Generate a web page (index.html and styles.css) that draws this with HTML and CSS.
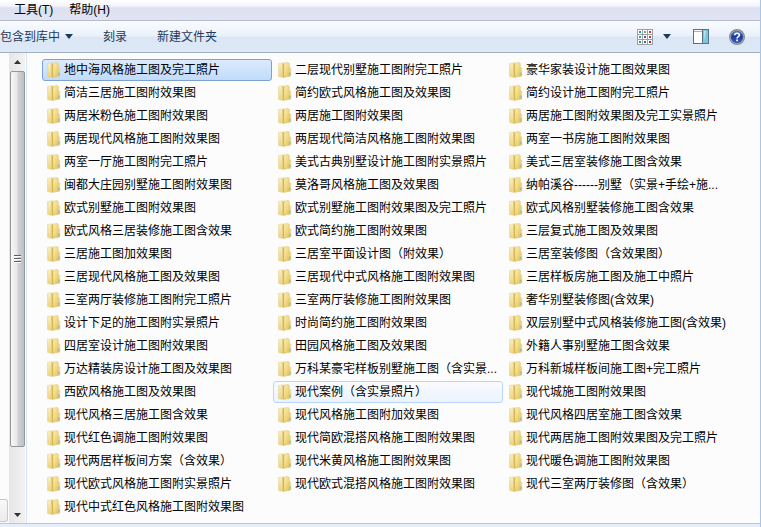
FILE: index.html
```html
<!DOCTYPE html>
<html lang="zh-CN"><head>
<meta charset="utf-8">
<meta name="viewport" content="width=device-width, initial-scale=1.0">
<title>施工图</title>
<link rel="stylesheet" href="styles.css">
</head>
<body>
<div class="window">
  <nav class="menubar">
    <button class="menu">工具(T)</button>
    <button class="menu">帮助(H)</button>
  </nav>

  <div class="toolbar">
    <button class="tool">包含到库中
      <svg class="arrow" width="8" height="5" viewBox="0 0 8 5"><path d="M0 0h8L4 5z"/></svg>
    </button>
    <button class="tool">刻录</button>
    <button class="tool">新建文件夹</button>
    <span class="spacer"></span>
    <button class="tool view" aria-label="更改视图">
      <svg id="view_icon" width="16" height="16" viewBox="0 0 16 16"></svg>
      <svg class="arrow" width="8" height="5" viewBox="0 0 8 5"><path d="M0 0h8L4 5z"/></svg>
    </button>
    <button class="tool preview" aria-label="预览窗格">
      <svg width="16" height="15" viewBox="0 0 16 15">
        <rect x=".5" y=".5" width="15" height="14" fill="#fff" stroke="#5b7088"/>
        <path d="M1 2.500h9" stroke="#a3b5c8"/>
        <rect x="10" y="1" width="5" height="13" fill="#7cc8dd"/>
        <path d="M11 12V2h2z" fill="#b5e5f1"/>
        <path d="M9.500 1v13" stroke="#5b7088"/>
      </svg>
    </button>
    <button class="tool" aria-label="帮助">
      <svg width="16" height="16" viewBox="0 0 16 16">
        <defs><linearGradient id="g_help" x1="0" y1="0" x2="0" y2="1">
          <stop offset="0" stop-color="#6482d0"/><stop offset=".45" stop-color="#1d3a9c"/><stop offset="1" stop-color="#3261cc"/>
        </linearGradient></defs>
        <circle cx="8" cy="8" r="7.400" fill="#c3c8d1" stroke="#858b96" stroke-width="1.200"/>
        <circle cx="8" cy="8" r="6" fill="url(#g_help)" stroke="#2b3f7d" stroke-width=".5"/>
        <path d="M5.700 6.300C5.800 3.600 10.400 3.600 10.400 6c0 1.700-2.300 1.600-2.300 3.400" fill="none" stroke="#fff" stroke-width="1.700"/>
        <rect x="7.200" y="10.500" width="1.800" height="1.700" fill="#fff"/>
      </svg>
    </button>
  </div>

  <div class="main">
    <div class="side"><div class="hscroll"></div></div>
    <div class="scrollbar">
      <svg class="up" width="7" height="4" viewBox="0 0 7 4"><path d="M0 4h7L3.500 0z"/></svg>
      <div class="thumb"><svg width="7" height="8" viewBox="0 0 7 8"><path d="M0 .5h7M0 3.500h7M0 6.500h7" stroke="#5c6066"/><path d="M0 1.500h7M0 4.500h7M0 7.500h7" stroke="#fff"/></svg></div>
      <svg class="down" width="7" height="4" viewBox="0 0 7 4"><path d="M0 0h7L3.500 4z"/></svg>
    </div>
    <ul class="files" id="files"></ul>
  </div>
  <div class="bottom"></div>
</div>

<svg width="0" height="0" class="defs">
  <defs>
    <linearGradient id="g_back" x1="0" y1="0" x2="0" y2="1">
      <stop offset="0" stop-color="#f7efc4"/><stop offset="1" stop-color="#ecd37c"/>
    </linearGradient>
    <linearGradient id="g_front" x1="0" y1="0" x2="1" y2="1">
      <stop offset="0" stop-color="#fbf3c0"/><stop offset=".6" stop-color="#efd87f"/><stop offset="1" stop-color="#e0be58"/>
    </linearGradient>
  </defs>
  <symbol id="folder" viewBox="0 0 14 16">
    <path d="M10.500 5.500l2.300.5v8.200l-2.800.6z" fill="#f1e0a0" stroke="#d8c07a" stroke-width=".4"/>
    <path d="M4.500 1.300l5.500-.8 1.300.8v12.700l-5.300 1.500z" fill="url(#g_front)" stroke="#dcc06a" stroke-width=".5"/>
    <path d="M.5 1.500L4.600.8v14.600l-4.100-.9z" fill="url(#g_back)" stroke="#e3d190" stroke-width=".5"/>
    <path d="M4.600.8l1.500 1.500v12.900l-1.500.2z" fill="#d9b655"/>
    <path d="M12 10.500v3" stroke="#6fb3b4"/>
  </symbol>
</svg>
<script src="script.js"></script>
</body>
</html>
```
FILE: styles.css
```css
* {box-sizing: border-box;}
body {
  margin: 0;
  font-family: "Liberation Sans", "Noto Sans CJK SC", sans-serif;
  font-size: 12px;
  line-height: 18px;
  color: #000;
}
button {
  font: inherit;
  color: inherit;
  background: none;
  border: 0;
  padding: 0;
  white-space: nowrap;
}
svg {display: block;}
.defs {position: absolute;}

.window {
  display: flex;
  flex-direction: column;
  min-height: 100vh;
  border-right: 1px solid #a9c6e8;
}

.menubar {
  display: flex;
  gap: 16px;
  height: 21px;
  padding: 0 14px;
  background: linear-gradient(#fff, #f3f5fb 30%, #dde0f0 40%, #e0e4f3);
  border-bottom: 1px solid #b3bccd;
}
.toolbar {
  display: flex;
  align-items: center;
  height: 32px;
  padding-right: 15px;
  color: #1e395b;
  background: linear-gradient(#fafcfe, #eaf1fa 48%, #dce6f4 52%, #dde9f7);
  border-bottom: 1px solid #a0afc3;
}
.tool {
  display: flex;
  align-items: center;
  gap: 5px;
  margin-right: 30px;
}
.tool:last-child {margin-right: 0;}
.view {gap: 10px; margin-right: 22px;}
.preview {margin-right: 20px;}
.arrow {fill: #1e395b;}
.spacer {flex: 1;}

.main {
  display: flex;
  flex: 1;
  background: #fcfcfc;
}
.side {
  display: flex;
  align-items: flex-end;
  width: 9px;
}
.hscroll {
  width: 8px;
  height: 23px;
  margin-bottom: 1px;
  background: linear-gradient(#f8f8f8, #ececec);
  border: 1px solid #c8c8c8;
  border-left: 0;
  border-radius: 0 3px 3px 0;
}
.scrollbar {
  display: flex;
  flex-direction: column;
  align-items: center;
  width: 16px;
  padding: 7px 0 6px;
  background: linear-gradient(90deg, #e6e6e6, #f2f2f2);
  fill: #333;
}
.thumb {
  display: flex;
  align-items: center;
  justify-content: center;
  width: 15px;
  flex: 1;
  margin: 7px 0 66px;
  background: linear-gradient(90deg, #f7f7f7, #e8e8ea 45%, #d0d1d5 55%, #bfc0c6);
  border: 1px solid #979797;
  border-radius: 2px;
}

.files {
  flex: 1;
  display: grid;
  grid-template-columns: repeat(auto-fill, 230px);
  grid-auto-rows: 22px;
  gap: 1px;
  margin: 0 0 0 1px;
  padding: 6px 0 5px 15px;
  list-style: none;
  border-left: 1px solid #d6e5f5;
}
.file {
  display: flex;
  align-items: center;
  gap: 3px;
  height: 22px;
  padding-left: 4px;
  border: 1px solid transparent;
  border-radius: 3px;
  color: #000;
  text-decoration: none;
  white-space: nowrap;
}
.file:hover, .hot {
  background: linear-gradient(#fafbfd, #ebf3fd);
  border-color: #b8d6fb;
}
.selected {
  background: linear-gradient(#dcebfc, #c1dbfc);
  border-color: #7da2ce;
}

.bottom {
  height: 4px;
  background: #e6eefa;
  border-top: 1px solid #b9c9dc;
}
```
FILE: script.js
```javascript
var names = [
  "地中海风格施工图及完工照片", "二层现代别墅施工图附完工照片", "豪华家装设计施工图效果图",
  "简洁三居施工图附效果图", "简约欧式风格施工图及效果图", "简约设计施工图附完工照片",
  "两居米粉色施工图附效果图", "两居施工图附效果图", "两居施工图附效果图及完工实景照片",
  "两居现代风格施工图附效果图", "两居现代简洁风格施工图附效果图", "两室一书房施工图附效果图",
  "两室一厅施工图附完工照片", "美式古典别墅设计施工图附实景照片", "美式三居室装修施工图含效果",
  "闽都大庄园别墅施工图附效果图", "莫洛哥风格施工图及效果图", "纳帕溪谷------别墅（实景+手绘+施...",
  "欧式别墅施工图附效果图", "欧式别墅施工图附效果图及完工照片", "欧式风格别墅装修施工图含效果",
  "欧式风格三居装修施工图含效果", "欧式简约施工图附效果图", "三层复式施工图及效果图",
  "三居施工图加效果图", "三居室平面设计图（附效果）", "三居室装修图（含效果图）",
  "三居现代风格施工图及效果图", "三居现代中式风格施工图附效果图", "三居样板房施工图及施工中照片",
  "三室两厅装修施工图附完工照片", "三室两厅装修施工图附效果图", "奢华别墅装修图(含效果)",
  "设计下足的施工图附实景照片", "时尚简约施工图附效果图", "双层别墅中式风格装修施工图(含效果)",
  "四居室设计施工图附效果图", "田园风格施工图及效果图", "外籍人事别墅施工图含效果",
  "万达精装房设计施工图及效果图", "万科某豪宅样板别墅施工图（含实景...", "万科新城样板间施工图+完工照片",
  "西欧风格施工图及效果图", "现代案例（含实景照片）", "现代城施工图附效果图",
  "现代风格三居施工图含效果", "现代风格施工图附加效果图", "现代风格四居室施工图含效果",
  "现代红色调施工图附效果图", "现代简欧混搭风格施工图附效果图", "现代两居施工图附效果图及完工照片",
  "现代两居样板间方案（含效果）", "现代米黄风格施工图附效果图", "现代暖色调施工图附效果图",
  "现代欧式风格施工图附实景照片", "现代欧式混搭风格施工图附效果图", "现代三室两厅装修图（含效果）",
  "现代中式红色风格施工图附效果图"
];
var state = {0: " selected", 43: " hot"};
var html = "";
names.forEach((name, i) => {
  html += '<li><a href="#" class="file' + (state[i] || "") + '">' +
    '<svg width="14" height="16"><use href="#folder"/></svg><span>' + name + '</span></a></li>';
});
document.getElementById("files").innerHTML = html;

// 3x3 grid of tiny thumbnails for the view button
var dots = ["#2f9a94", "#8fa83f", "#c33b35", "#3b9a94", "#45628f", "#c33b35", "#3f8f56", "#45628f", "#b3262b"];
var cells = "";
dots.forEach((c, i) => {
  var x = i % 3 * 5, y = Math.floor(i / 3) * 5;
  cells += '<rect x="' + (x + .5) + '" y="' + (y + .5) + '" width="5" height="5" fill="#fff" stroke="#9aa1ab"/>' +
    '<rect x="' + (x + 2) + '" y="' + (y + 2) + '" width="2" height="2" fill="' + c + '"/>';
});
document.getElementById("view_icon").innerHTML = cells;
```
